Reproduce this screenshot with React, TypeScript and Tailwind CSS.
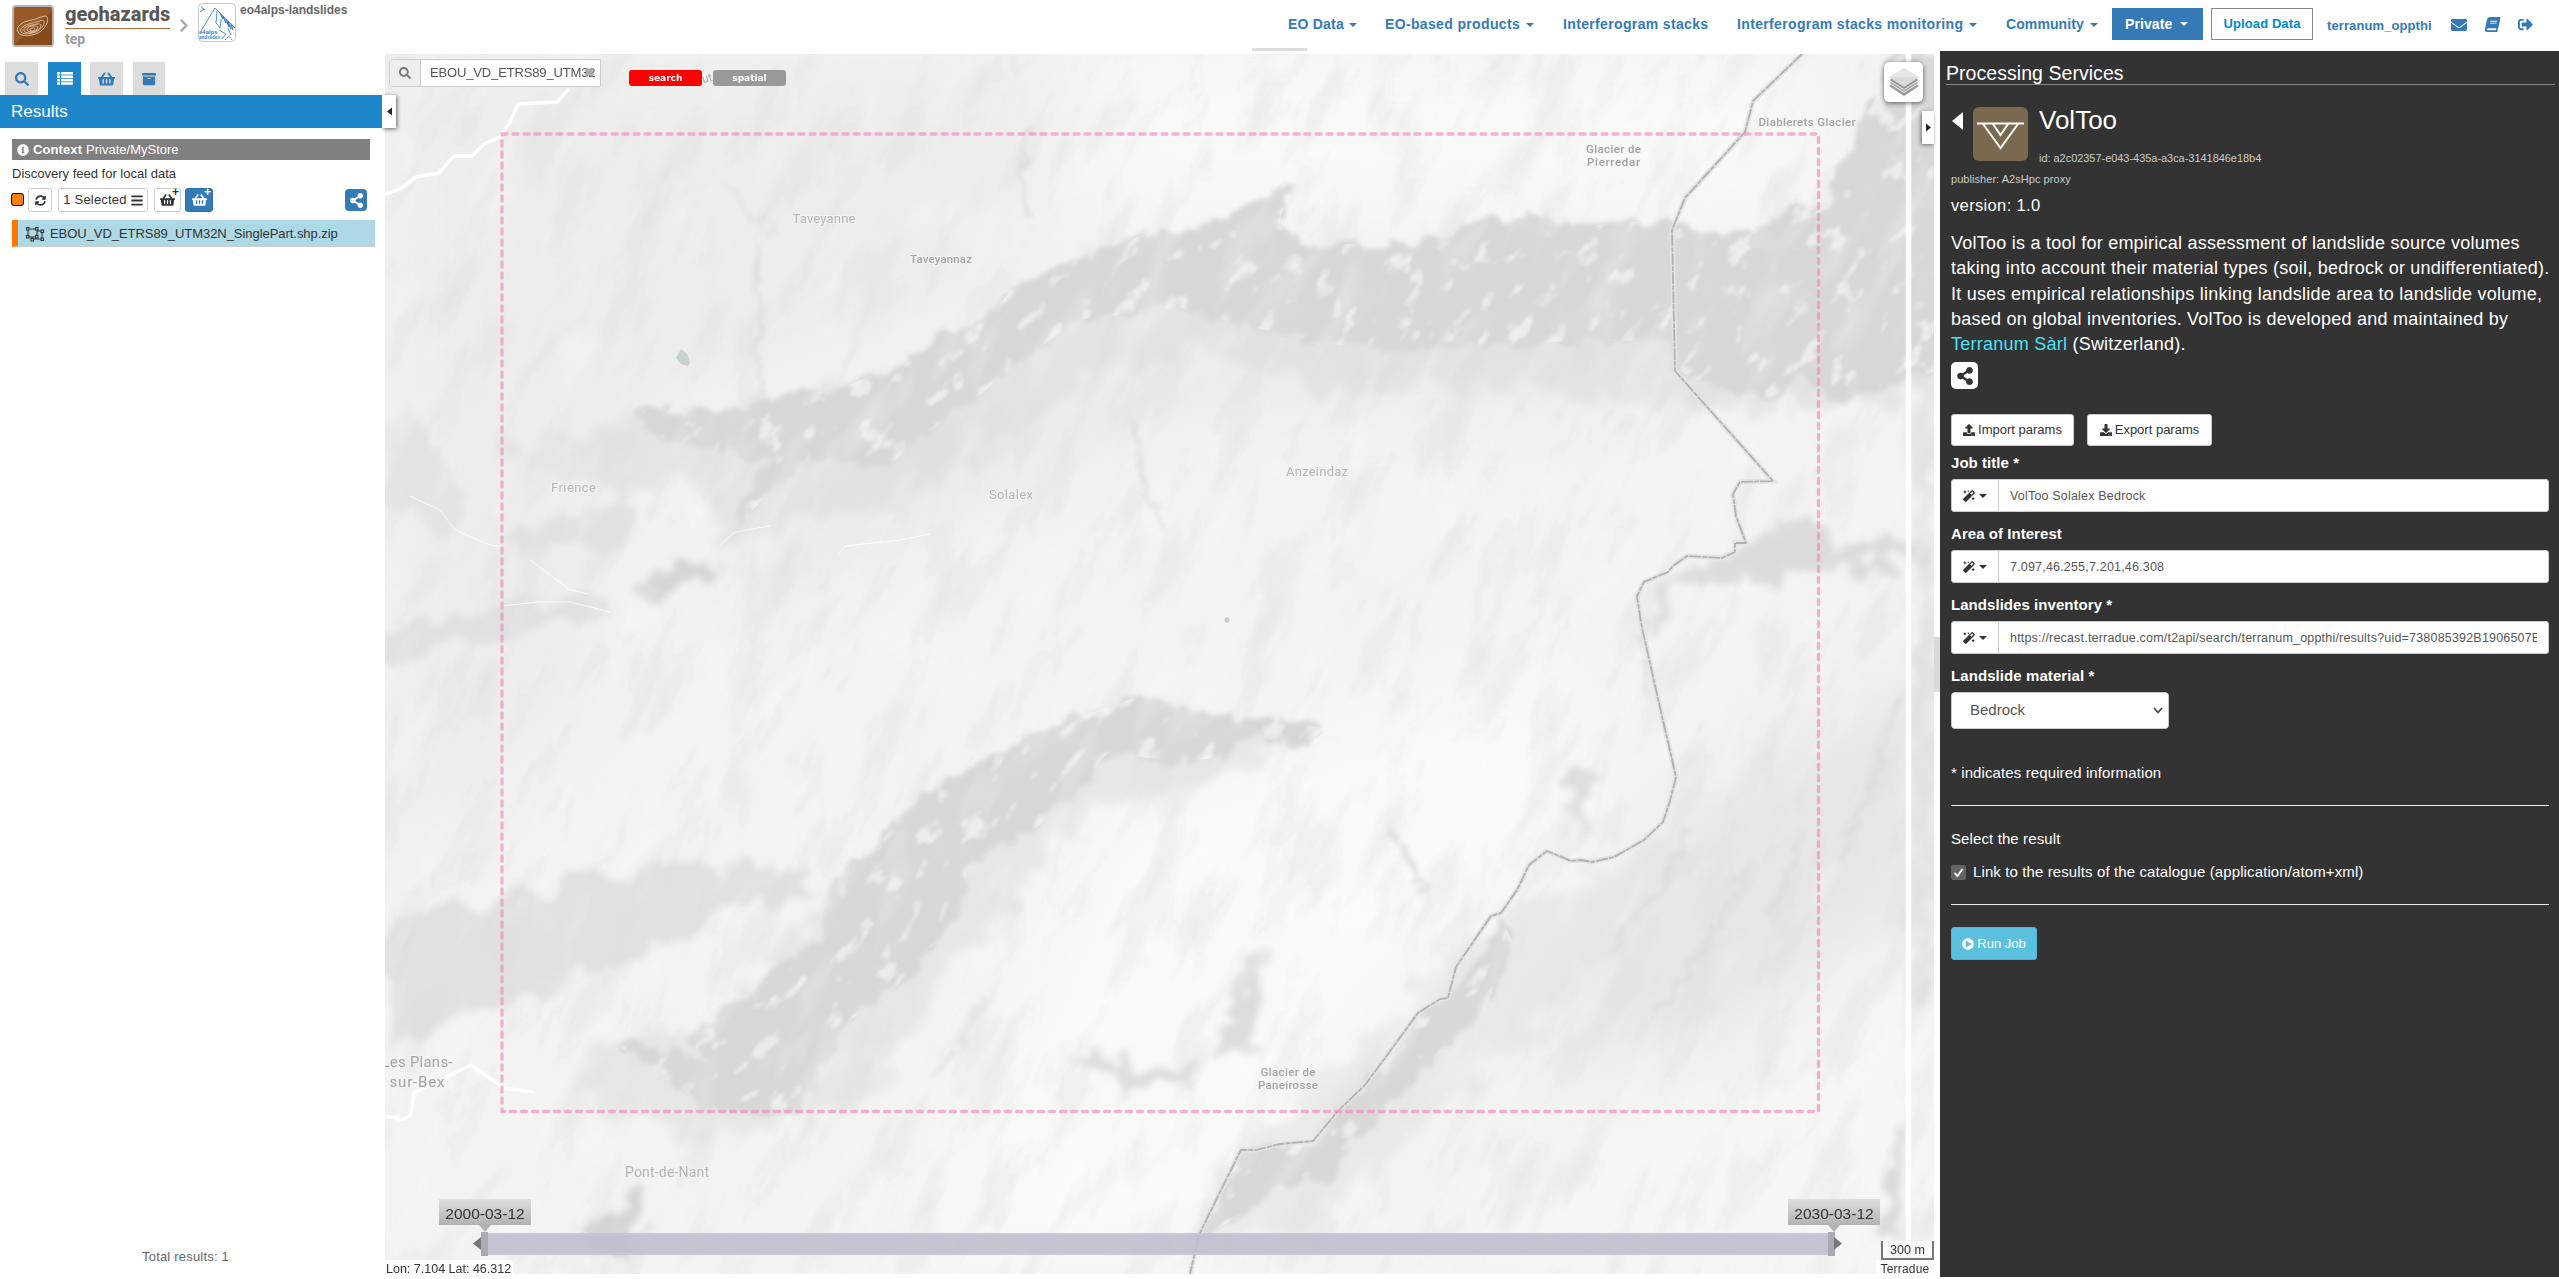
import React from 'react';
import {
  FaSearch, FaShoppingBasket, FaArchive, FaInfoCircle, FaSyncAlt, FaBars, FaShareAlt,
  FaEnvelope, FaBook, FaSignOutAlt, FaUpload, FaDownload, FaMagic, FaPlayCircle, FaChevronRight,
} from 'react-icons/fa';

function Caret({ className = '' }: { className?: string }) {
  return (
    <svg viewBox="0 0 8 4" className={`h-[4px] w-[8px] ${className}`} fill="currentColor">
      <path d="M0 0h8L4 4z" />
    </svg>
  );
}

function GeohazardsLogo() {
  return (
    <svg viewBox="0 0 42 42" className="h-[42px] w-[42px] shrink-0">
      <rect x="1" y="1" width="40" height="40" rx="3" fill="#96592a" stroke="#b9b4b0" strokeWidth="2" />
      <path d="M2 40L40 6v34z" fill="#874a1c" />
      <g fill="none" stroke="#e2c7ae" strokeWidth=".9">
        <path d="M6 27c-3-6 6-11 14-12 6-1 13-6 15-3 2 4-1 10-6 14-6 5-20 7-23 1z" />
        <path d="M9 27c-2-5 6-8 12-9 5-1 10-4 11-2 1 3-2 7-6 10-5 3-15 4-17 1z" />
        <path d="M12 26c-1-4 5-6 9-6 4-1 7-2 8 0 0 3-2 4-5 6-4 2-10 3-12 0z" />
        <path d="M15 25c0-3 4-4 6-4 3 0 5 0 5 1 0 2-2 3-4 4-3 1-6 1-7-1z" />
        <path d="M18 25c0-2 2-2 3-2s2 0 2 1-1 2-2 2-3 0-3-1z" />
      </g>
    </svg>
  );
}

function AlpsThumb() {
  return (
    <svg viewBox="0 0 38 39" className="h-[39px] w-[38px] shrink-0">
      <rect x=".5" y=".5" width="37" height="38" rx="4" fill="#fff" stroke="#c4c8cc" />
      <g fill="none" stroke="#3b82c4" strokeWidth=".9">
        <path d="M3 28L17 5l20 20" />
        <path d="M19 8l-1 12 4 5 1-9M21 27l7 4-4 5M30 25l3 7M3 4l4 3M2 9l4-3" />
        <path d="M22 10l3 6M25 13l3 7M28 16l3 8M30 18l3 8M33 21l2 6" strokeWidth="1.3" />
        <path d="M27 37l4-4 3 4" strokeDasharray="2 1" />
      </g>
      <text x="1" y="31" fontSize="6" fontWeight="bold" fill="#3b82c4" fontFamily="Liberation Sans, sans-serif">e4alps</text>
      <text x="1" y="36" fontSize="4.5" fontWeight="bold" fill="#3b82c4" fontFamily="Liberation Sans, sans-serif">andslides</text>
    </svg>
  );
}

function Header() {
  const link = 'flex items-center whitespace-nowrap';
  return (
    <header className="flex h-[51px] shrink-0 items-start bg-white">
      <div className="flex w-[1252px] items-start">
        <div className="ml-[12px] mt-[5px]"><GeohazardsLogo /></div>
        <div className="ml-[11px] mt-[2px] w-[105px]">
          <div className="h-[27px] border-b border-[#b5653a] font-['Roboto'] text-[20px] leading-[24px] font-extrabold text-[#575757]">geohazards</div>
          <div className="pt-px font-['Roboto'] text-[14px] leading-[18px] font-bold text-[#9a9a9a]">tep</div>
        </div>
        <FaChevronRight className="mt-[18px] ml-[8px] h-[15px] w-[12px] text-[#aaa]" />
        <div className="ml-[8px] mt-[3px]"><AlpsThumb /></div>
        <div className="ml-[4px] mt-[2px] text-[12px] leading-[16px] font-bold text-[#666]">eo4alps-landslides</div>
      </div>
      <nav className="flex h-[51px] items-start text-[14px] font-bold tracking-[0.350px] text-[#337ab7]">
        <div className="relative h-[51px] w-[133px]">
          <div className="absolute bottom-0 left-0 h-[3px] w-[55px] bg-[#ddd]" />
          <div className={`${link} ml-[36px] h-[49px] tracking-[0.200px]`}>EO Data<Caret className="ml-[5px]" /></div>
        </div>
        <div className={`${link} h-[49px] w-[178px]`}>EO-based products<Caret className="ml-[6px]" /></div>
        <div className={`${link} h-[49px] w-[174px]`}>Interferogram stacks</div>
        <div className={`${link} h-[49px] w-[269px]`}>Interferogram stacks monitoring<Caret className="ml-[6px]" /></div>
        <div className={`${link} h-[49px] w-[106px] tracking-[0.100px]`}>Community<Caret className="ml-[6px]" /></div>
        <div className={`${link} mt-[8px] h-[32px] w-[91px] bg-[#337ab7] pl-[13px] tracking-[0.100px] text-white`}>Private<Caret className="ml-[8px]" /></div>
        <div className="mt-[8px] ml-[8px] flex h-[32px] w-[102px] items-center justify-center border border-[#888] pb-px text-[13px] tracking-[0.100px] text-[#0088cc]">Upload Data</div>
        <div className={`${link} mt-[2px] ml-[14px] h-[47px] w-[124px] text-[13px] tracking-[0.100px]`}>terranum_oppthi</div>
        <FaEnvelope className="mt-[17px] h-[16px] w-[16px]" />
        <FaBook className="mt-[17px] ml-[18px] h-[15px] w-[15px] -skew-x-12" />
        <FaSignOutAlt className="mt-[17px] ml-[18px] h-[15px] w-[15px]" />
      </nav>
    </header>
  );
}

function ListIcon() {
  return (
    <svg viewBox="0 0 16 13" className="h-[13px] w-[16px]" fill="#fff">
      {[0, 3.4, 6.8, 10.2].map((y) => (
        <g key={y}><rect y={y} width="3" height="2.6" /><rect x="4" y={y} width="12" height="2.6" /></g>
      ))}
    </svg>
  );
}

function PolygonIcon() {
  return (
    <svg viewBox="0 0 20 16" className="h-[16px] w-[20px]" fill="none" stroke="#333" strokeWidth="1.1">
      <path d="M3 3h9v8H3zM12 5h5v8H7v-2" />
      <g fill="#add8e6">
        <rect x="1.500" y="1.500" width="2.500" height="2.500" /><rect x="10.500" y="1.500" width="2.500" height="2.500" />
        <rect x="1.500" y="9.500" width="2.500" height="2.500" /><rect x="10.500" y="9.500" width="2.500" height="2.500" />
        <rect x="16" y="4" width="2.500" height="2.500" /><rect x="16" y="12" width="2.500" height="2.500" /><rect x="6" y="12.500" width="2.500" height="2.500" />
      </g>
    </svg>
  );
}

function LeftPanel() {
  return (
    <aside className="flex w-[382px] shrink-0 flex-col bg-white text-[#333]">
      <div className="flex h-[44px] items-end pl-[5px]">
        <div className="flex h-[33px] w-[33px] items-center justify-center bg-[#ddd] text-[#337ab7]"><FaSearch className="h-[14px] w-[14px]" /></div>
        <div className="ml-[10px] flex h-[33px] w-[33px] items-center justify-center bg-[#1e87cc]"><ListIcon /></div>
        <div className="ml-[9px] flex h-[33px] w-[33px] items-center justify-center bg-[#ddd] text-[#337ab7]"><FaShoppingBasket className="h-[16px] w-[17px]" /></div>
        <div className="ml-[10px] flex h-[33px] w-[32px] items-center justify-center bg-[#ddd] text-[#337ab7]"><FaArchive className="h-[14px] w-[14px]" /></div>
      </div>
      <div className="flex h-[33px] items-center bg-[#1e87cc] pt-px pl-[11px] text-[17px] text-white">Results</div>
      <div className="mt-[11px] ml-[12px] flex h-[21px] w-[358px] items-center bg-[#808080] pl-[5px] text-[13px] text-white">
        <FaInfoCircle className="h-[12px] w-[12px]" />
        <b className="ml-[4px] tracking-[0.100px]">Context</b><span className="ml-[4px]">Private/MyStore</span>
      </div>
      <div className="mt-[4px] ml-[12px] h-[20px] text-[13px] leading-[20px]">Discovery feed for local data</div>
      <div className="mt-[4px] flex h-[24px] items-center pl-[11px]">
        <div className="-mt-px h-[13px] w-[13px] rounded-[3px] border border-black bg-[#ff7f00]" />
        <div className="ml-[4px] flex h-[24px] w-[24px] items-center justify-center rounded-[3px] border border-[#ccc]"><FaSyncAlt className="h-[11px] w-[11px]" /></div>
        <div className="ml-[6px] flex h-[24px] w-[90px] items-center justify-center rounded-[3px] border border-[#ccc] text-[13px] tracking-[0.200px]">1 Selected<FaBars className="ml-[4px] h-[13px] w-[12px]" /></div>
        <div className="relative ml-[6px] flex h-[24px] w-[27px] items-center justify-center rounded-[3px] border border-[#ccc]">
          <FaShoppingBasket className="h-[14px] w-[15px]" /><span className="absolute top-[-5px] right-[1px] text-[12px] leading-[16px] font-bold">+</span>
        </div>
        <div className="relative ml-[4px] flex h-[24px] w-[28px] items-center justify-center rounded-[3px] border border-[#2e6da4] bg-[#337ab7] text-white">
          <FaShoppingBasket className="h-[14px] w-[15px]" /><span className="absolute top-[-5px] right-[1px] text-[12px] leading-[16px] font-bold">+</span>
        </div>
        <div className="ml-[132px] flex h-[22px] w-[22px] items-center justify-center rounded-[4px] bg-[#337ab7] text-white"><FaShareAlt className="h-[15px] w-[15px]" /></div>
      </div>
      <div className="mt-[8px] ml-[12px] flex h-[27px] w-[363px] items-center border-b border-l-[6px] border-b-[#ccc] border-l-[#ff7700] bg-[#add8e6] pt-px pl-[7px] text-[13px]">
        <PolygonIcon /><span className="ml-[5px] tracking-[-0.05px]">EBOU_VD_ETRS89_UTM32N_SinglePart.shp.zip</span>
      </div>
      <div className="mt-auto mb-[12px] pl-[142px] text-[13px] leading-[16px] tracking-[0.200px] text-[#666]">Total results: 1</div>
    </aside>
  );
}

const UPPER_RIDGE = 'M635 410L747 410 752 400 839 389 880 372 921 358 936 332 967 325 987 319 1012 289 1064 266 1145 234 1180 232 1202 224 1240 214 1262 196 1290 180 1279 226 1308 244 1422 244 1485 219 1534 216 1577 227 1665 219 1718 233 1752 233 1791 206 1829 207 1840 170 1856 130 1880 90 1890 54 1940 54 1940 370 1907 380 1839 405 1805 373 1771 401 1728 394 1674 369 1674 341 1568 341 1430 350 1325 344 1291 337 1180 308 1084 319 1033 351 972 401 911 444 890 466 803 462 770 490 737 530 745 490 768 462 706 451 645 433z';
const LOWER_RIDGE = 'M1146 694L1057 724 997 754 927 790 877 844 828 886 823 940 778 965 728 1011 688 1033 703 1061 649 1040 619 1047 668 1076 708 1111 798 1115 818 1076 838 1029 897 986 957 919 967 869 1040 825 1076 790 1106 754 1176 761 1226 758 1246 736 1305 744 1325 729 1265 715 1236 722 1196 711z';
const BORDER_RIDGE = 'M1501 915L1478 955 1455 997 1420 1013 1375 1076 1335 1118 1315 1143 1241 1151 1199 1240 1240 1215 1275 1190 1335 1179 1360 1136 1425 1068 1484 1011 1514 947z';
const BORDER = 'M1802 54L1753 101 1745 132 1685 198 1672 230 1675 371 1773 481 1740 482 1733 494 1736 516 1746 543 1735 543 1735 552 1722 558 1687 556 1673 566 1668 572 1644 582 1637 596 1641 623 1656 690 1676 777 1670 801 1663 822 1644 840 1614 857 1592 862 1581 860 1571 861 1547 851 1529 865 1517 890 1501 913 1491 916 1456 967 1448 998 1440 999 1418 1013 1385 1058 1365 1085 1338 1111 1323 1129 1313 1141 1280 1144 1256 1150 1241 1150 1221 1190 1199 1235 1190 1274';

const PLACES: { t: string; x: number; y: number; s: number; w: number; c: string; b?: boolean }[] = [
  { t: 'Taveyanne', x: 824, y: 223, s: 13, w: 63, c: '#b4b4b4' },
  { t: 'Taveyannaz', x: 941, y: 263, s: 11.5, w: 62, c: '#a3a3a3', b: true },
  { t: 'Frience', x: 573.5, y: 492, s: 13, w: 45, c: '#b4b4b4' },
  { t: 'Solalex', x: 1011, y: 499, s: 13, w: 44, c: '#b4b4b4' },
  { t: 'Anzeindaz', x: 1317, y: 476, s: 13, w: 62, c: '#b4b4b4' },
  { t: 'Glacier de', x: 1613.5, y: 153, s: 11.5, w: 55, c: '#a3a3a3', b: true },
  { t: 'Pierredar', x: 1613.5, y: 166, s: 11.5, w: 53, c: '#a3a3a3', b: true },
  { t: 'Diablerets Glacier', x: 1807, y: 126, s: 11.5, w: 97, c: '#a3a3a3', b: true },
  { t: 'Les Plans-', x: 417, y: 1067, s: 15, w: 71, c: '#a3a3a3' },
  { t: 'sur-Bex', x: 417, y: 1087, s: 15, w: 55, c: '#a3a3a3' },
  { t: 'Glacier de', x: 1288, y: 1076, s: 11.5, w: 55, c: '#a3a3a3', b: true },
  { t: 'Paneirosse', x: 1288, y: 1089, s: 11.5, w: 60, c: '#a3a3a3', b: true },
  { t: 'Pont-de-Nant', x: 667, y: 1177, s: 14, w: 84, c: '#b4b4b4' },
];

function Terrain() {
  return (
    <svg viewBox="385 54 1549 1220" className="block h-[1220px] w-[1549px]">
      <defs>
        <filter id="rough" x="-10%" y="-10%" width="120%" height="120%">
          <feTurbulence type="fractalNoise" baseFrequency="0.05" numOctaves="3" seed="4" result="n" />
          <feDisplacementMap in="SourceGraphic" in2="n" scale="24" xChannelSelector="R" yChannelSelector="G" />
          <feGaussianBlur stdDeviation="2" />
        </filter>
        <filter id="soft" x="-30%" y="-30%" width="160%" height="160%">
          <feTurbulence type="fractalNoise" baseFrequency="0.03" numOctaves="3" seed="9" result="n" />
          <feDisplacementMap in="SourceGraphic" in2="n" scale="50" xChannelSelector="R" yChannelSelector="G" />
          <feGaussianBlur stdDeviation="3.500" />
        </filter>
        <filter id="halo" x="-10%" y="-10%" width="120%" height="120%">
          <feTurbulence type="fractalNoise" baseFrequency="0.03" numOctaves="3" seed="12" result="n" />
          <feDisplacementMap in="SourceGraphic" in2="n" scale="60" xChannelSelector="R" yChannelSelector="G" />
          <feGaussianBlur stdDeviation="4" />
        </filter>
        <filter id="wide" x="-30%" y="-30%" width="160%" height="160%"><feGaussianBlur stdDeviation="40" /></filter>
        <filter id="shade" x="0" y="0" width="100%" height="100%">
          <feTurbulence type="fractalNoise" baseFrequency="0.009 0.026" numOctaves="4" seed="21" />
          <feColorMatrix values="0 0 0 0 .7  0 0 0 0 .7  0 0 0 0 .695  2.2 0 0 0 -.98" />
          <feComponentTransfer><feFuncA type="discrete" tableValues="0 0.09 0.18 0.27 0.36 0.45 .5" /></feComponentTransfer>
          <feGaussianBlur stdDeviation="0.700" />
        </filter>
        <filter id="light" x="0" y="0" width="100%" height="100%">
          <feTurbulence type="fractalNoise" baseFrequency="0.01 0.03" numOctaves="4" seed="33" />
          <feColorMatrix values="0 0 0 0 .98  0 0 0 0 .98  0 0 0 0 .975  0 3 0 0 -1.55" />
          <feGaussianBlur stdDeviation="0.800" />
        </filter>
        <filter id="glint" x="0" y="0" width="100%" height="100%">
          <feTurbulence type="fractalNoise" baseFrequency="0.03 0.06" numOctaves="3" seed="7" />
          <feColorMatrix values="0 0 0 0 .93  0 0 0 0 .93  0 0 0 0 .925  0 7 0 0 -4.25" />
          <feGaussianBlur stdDeviation="1" />
        </filter>
        <clipPath id="ridges"><path d={UPPER_RIDGE} /><path d={LOWER_RIDGE} /><path d={BORDER_RIDGE} /></clipPath>
      </defs>
      <rect x="385" y="54" width="1549" height="1220" fill="#f3f3f1" />
      <g filter="url(#wide)">
        <path d="M385 54H1060L1000 300 640 420 600 700 385 900z" fill="#ededec" />
        <path d="M1100 54H1800V210H1100z" fill="#f9f9f7" />
        <path d="M1100 800L1560 640 1600 820 1400 1000 1200 1274H900z" fill="#f9f9f7" />
        <path d="M1690 800L1934 660V900L1700 1060 1520 1060z" fill="#e6e6e5" />
        <path d="M1934 900V1274H1400z" fill="#f6f6f4" />
        <path d="M800 460L1180 310H1680L1640 400 1200 400 900 540 700 640z" fill="#e9e9e8" />
      </g>
      <g transform="rotate(-66 1160 664)"><rect x="60" y="-400" width="2200" height="2150" filter="url(#shade)" opacity=".85" /></g>
      <g filter="url(#halo)" opacity=".55">
        <path d="M635 420L900 380 1100 260 1300 270 1700 250 1934 220 1934 400 1700 410 1500 385 1330 390 1200 350 1100 370 990 450 900 500 800 520 720 560 700 490 560 480 500 450z" fill="#dcdcdb" />
        <path d="M1146 700L960 780 830 900 720 1020 610 1040 560 1090 700 1140 850 1110 960 960 1090 810 1180 790 1340 740z" fill="#dededd" />
        <path d="M1501 915L1241 1151 1199 1240 1300 1230 1450 1100 1560 1010 1640 900 1700 860 1660 840z" fill="#e2e2e1" />
      </g>
      <g filter="url(#soft)">
        <path d="M385 926L480 904 559 883 688 861 798 868 830 890 758 904 658 947 529 997 385 1047z" fill="#dcdcdb" opacity=".8" />
        <path d="M385 635L480 612 560 596 620 600 520 628 440 655 385 670z" fill="#dcdcdb" opacity=".7" />
        <path d="M640 605L655 573 727 558 686 591z" fill="#d5d5d4" />
        <path d="M385 430L412 410 440 450 470 510 440 540 385 500z" fill="#e0e0df" opacity=".7" />
        <path d="M500 540L560 515 640 515 620 545 520 555z" fill="#dfdfde" opacity=".8" />
        <path d="M1066 1050L1120 1066 1200 1068 1190 1085 1136 1093z" fill="#dcdcdb" />
        <path d="M1250 945L1265 960 1248 1040 1220 1062 1226 1020z" fill="#dcdcdb" />
        <path d="M648 1179L579 1240 619 1250 650 1200z" fill="#d4d4d3" />
        <path d="M1892 1130L1906 1110 1900 1240 1880 1250z" fill="#dadad9" />
        <path d="M1574 765L1590 765 1580 830 1566 850z" fill="#dededd" />
        <path d="M1735 552L1790 520 1850 545 1934 540 1934 560 1830 570 1740 580 1670 590 1660 640 1650 590z" fill="#dbdbda" />
        <path d="M1912 54H1934V1000L1912 1000z" fill="#dcdcdb" opacity=".6" />
      </g>
      <g fill="none" stroke="#dadad9" strokeLinecap="round" strokeWidth="5" filter="url(#rough)" opacity=".7">
        <path d="M1030 130L1020 168 1028 214M757 248L760 300 758 350 763 390M1135 426L1145 480 1160 523M1390 826L1405 860 1425 890" />
        <path d="M1640 620L1646 690M1900 700L1870 790 1840 860M1750 860L1710 940 1660 1010M1690 830L1660 890 1610 950M1800 840L1770 920" />
        <path d="M1000 980L960 1040 930 1080M770 230L740 200 720 185" opacity=".6" />
      </g>
      <g filter="url(#rough)" fill="#d8d8d7">
        <path d={UPPER_RIDGE} /><path d={LOWER_RIDGE} /><path d={BORDER_RIDGE} />
      </g>
      <g clipPath="url(#ridges)">
        <g transform="rotate(-50 1160 664)"><rect x="60" y="-400" width="2200" height="2150" filter="url(#glint)" opacity=".65" /></g>
      </g>
      <g transform="rotate(-62 1160 664)"><rect x="60" y="-400" width="2200" height="2150" filter="url(#light)" opacity=".25" /></g>
      <path d="M681 349L687 354 690 362 688 366 681 364 676 358z" fill="#c7d0d2" />
      <ellipse cx="1227" cy="620" rx="2.500" ry="2.800" fill="#c7cccd" />
      <g fill="none" stroke="#fff" strokeLinecap="round" strokeLinejoin="round">
        <path d="M568 90L557 102 518 104 510 122 500 137 484 144 472 156 454 156 439 173 416 177 400 189 385 194M385 1117L394 1117 402 1120 411 1115 414 1093 430 1085 471 1065 504 1088 532 1092" strokeWidth="3.500" />
        <path d="M410 496L440 510 455 530 490 545 500 546M500 606L540 602 570 602 610 612M530 560L570 590 588 594M720 545L735 532 770 526M838 555L845 546 900 540 930 534" strokeWidth="1" opacity=".8" />
      </g>
      <path d={BORDER} fill="none" stroke="#e4e4e3" strokeWidth="5" />
      <path d={BORDER} fill="none" stroke="#b2b2b1" strokeWidth="1.800" strokeDasharray="12 1 5 1" />
      <path d="M1908.500 54V1245" stroke="#fff" strokeWidth="5.500" />
      <g fontFamily="Roboto, sans-serif" textAnchor="middle" stroke="#f3f3f2" strokeWidth="2" paintOrder="stroke">
        {PLACES.map((p, i) => (
          <text key={i} x={p.x} y={p.y} fontSize={p.s} fontWeight={p.b ? 500 : 400} fill={p.c} textLength={p.w}>{p.t}</text>
        ))}
        <text x="708" y="82" fontSize="12" fill="#a8a8a8" transform="rotate(-14 708 82)">ut</text>
      </g>
      <rect x="502" y="134" width="1316.500" height="977.500" fill="none" stroke="#f08dbf" strokeOpacity=".68" strokeWidth="3.300" strokeDasharray="5 6" strokeLinecap="round" />
    </svg>
  );
}

function LayersIcon() {
  return (
    <svg viewBox="0 0 30 28" className="h-[28px] w-[30px]">
      <path d="M15 9L30 18 15 28 0 18z" fill="#9a9a9a" />
      <path d="M15 6L30 15 15 24.500 0 15z" fill="#a8a8a8" stroke="#fff" strokeWidth=".8" />
      <path d="M15 3L30 12 15 21.500 0 12z" fill="#8e8e8e" stroke="#fff" strokeWidth=".8" />
      <path d="M15 0L30 9.500 15 19 0 9.500z" fill="#d9d9d9" />
      <path d="M15 0L30 9.500 0 9.500z" fill="#e6e6e6" />
    </svg>
  );
}

function DateFlag({ label, className }: { label: string; className: string }) {
  return (
    <div className={`absolute top-[1145px] w-[92px] ${className}`}>
      <div className="flex h-[26px] items-center justify-center bg-linear-to-b from-[#dedede] to-[#b2b2b2] pt-[3px] text-[15.500px] text-[#333]">{label}</div>
      <svg viewBox="0 0 12 7" className="mx-auto h-[7px] w-[12px]"><path d="M0 0h12L6 7z" fill="#b2b2b2" /></svg>
    </div>
  );
}

function MapPane() {
  return (
    <div className="relative mt-[3px] ml-[3px] h-[1220px] w-[1549px] shrink-0">
      <Terrain />
      <div className="absolute top-[5px] left-[4px] flex h-[28px] w-[212px] overflow-hidden rounded-l-[4px] border border-[#ccc] bg-white">
        <div className="flex w-[31px] shrink-0 items-center justify-center border-r border-[#ccc] bg-[#eee]"><FaSearch className="h-[12px] w-[12px] text-[#777]" /></div>
        <div className="relative flex w-[179px] shrink-0 items-center pl-[9px] text-[13px] whitespace-nowrap text-[#555]">
          <span className="tracking-[-0.150px]">EBOU_VD_ETRS89_UTM32</span>
          <span className="absolute top-[5px] right-[5px] text-[13px] leading-[16px] font-bold text-[#aaa]">✖</span>
        </div>
      </div>
      <div className="absolute top-[16px] left-[244px] flex gap-[11px] text-center font-['DejaVu_Sans'] text-[9px] leading-[16px] font-bold text-white">
        <div className="h-[16px] w-[73px] rounded-[3px] bg-[#ff0000]">search</div>
        <div className="h-[16px] w-[73px] rounded-[3px] bg-[#999]">spatial</div>
      </div>
      <div className="absolute top-[41px] left-[-3px] flex h-[33px] w-[14px] items-center bg-white pl-[5px] shadow-[1px_1px_4px_rgba(0,0,0,0.6)] [clip-path:inset(-5px_-6px_-6px_0)]">
        <svg viewBox="0 0 5 8" className="h-[9px] w-[5px]"><path d="M5 0v8L0 4z" fill="#222" /></svg>
      </div>
      <div className="absolute top-[57px] left-[1537px] flex h-[33px] w-[12px] items-center bg-white pl-[4px] shadow-[-1px_1px_4px_rgba(0,0,0,0.5)]">
        <svg viewBox="0 0 5 8" className="h-[9px] w-[5px]"><path d="M0 0v8l5-4z" fill="#222" /></svg>
      </div>
      <div className="absolute top-[8px] left-[1499px] flex h-[40px] w-[39px] items-center justify-center rounded-[5px] bg-white shadow-[0_1px_5px_rgba(0,0,0,0.6)]"><LayersIcon /></div>
      <DateFlag label="2000-03-12" className="left-[54px]" />
      <DateFlag label="2030-03-12" className="left-[1403px]" />
      <div className="absolute top-[1179px] left-[103px] h-[22px] w-[1340px] border-y-2 border-[#c8c8d8]/80 bg-[#bfbfcc]/90" />
      <div className="absolute top-[1178px] left-[96px] h-[24px] w-[7px] bg-[#aaaab2]" />
      <div className="absolute top-[1178px] left-[1443px] h-[24px] w-[7px] bg-[#aaaab2]" />
      <svg viewBox="0 0 8 13" className="absolute top-[1183px] left-[88px] h-[13px] w-[8px]"><path d="M8 0v13L0 6.500z" fill="#777" /></svg>
      <svg viewBox="0 0 8 13" className="absolute top-[1183px] left-[1449px] h-[13px] w-[8px]"><path d="M0 0v13l8-6.500z" fill="#777" /></svg>
      <div className="absolute right-0 bottom-[14px] h-[19px] w-[53px] border-2 border-t-0 border-[#777] bg-white/50 text-center text-[12.500px] leading-[18px] tracking-[0.100px] text-[#333]">300 m</div>
      <div className="absolute right-0 bottom-0 h-[14px] w-[58px] bg-white/70 pt-px text-center text-[12px] leading-[16px] tracking-[0.200px] text-[#333]">Terradue</div>
      <div className="absolute bottom-0 left-0 h-[14px] w-[128px] rounded-tr-[4px] bg-white/80 pt-px pl-px text-[12.500px] leading-[16px] whitespace-nowrap text-[#333]">Lon: 7.104 Lat: 46.312</div>
    </div>
  );
}

function Field({ label, value }: { label: string; value: string }) {
  return (
    <div className="h-[71px]">
      <div className="h-[26px] text-[15px] leading-[20px] font-bold tracking-[0.050px]">{label}</div>
      <div className="flex h-[33px] overflow-hidden rounded-[3px] border border-[#ccc] bg-white text-[#333]">
        <div className="flex w-[47px] shrink-0 items-center justify-center border-r border-[#ccc]"><FaMagic className="h-[12px] w-[12px]" /><Caret className="ml-[4px]" /></div>
        <div className="mr-[11px] ml-[11px] flex flex-1 items-center overflow-hidden pt-px text-[12.500px] tracking-[0.190px] whitespace-nowrap text-[#555]"><span>{value}</span></div>
      </div>
    </div>
  );
}

function ServicePanel() {
  return (
    <aside className="flex w-[619px] flex-col bg-[#333] pl-[6px] text-white">
      <div className="mr-[4px] flex h-[34px] items-end border-b border-[#888] text-[19.500px] leading-[22px] tracking-[0.050px]">Processing Services</div>
      <div className="mr-[10px] ml-[5px] flex flex-col">
        <div className="mt-[22px] flex h-[55px]">
          <svg viewBox="0 0 11 18" className="mt-[5px] ml-px h-[18px] w-[11px]"><path d="M11 0v18L0 9z" fill="#fff" /></svg>
          <svg viewBox="0 0 55 54" className="ml-[10px] h-[54px] w-[55px]">
            <rect width="55" height="54" rx="6" fill="#7a684f" />
            <path d="M4 16.500H51M10 17L27.500 41 45 17M20 17L27.500 28 35 17" fill="none" stroke="#fff" strokeWidth="2" />
          </svg>
          <div className="ml-[11px]">
            <div className="text-[26px] leading-[26px]">VolToo</div>
            <div className="mt-[18px] text-[11px] leading-[14px] tracking-[-0.04px] whitespace-nowrap text-[#ccc]">id: a2c02357-e043-435a-a3ca-3141846e18b4</div>
          </div>
        </div>
        <div className="mt-[10px] h-[14px] text-[11px] leading-[14px] tracking-[0.050px] text-[#ccc]">publisher: A2sHpc proxy</div>
        <div className="mt-[9px] h-[20px] text-[16.500px] leading-[20px] tracking-[0.350px]">version: 1.0</div>
        <p className="mt-[16px] h-[125px] w-[606px] text-[18px] leading-[25.300px] tracking-[0.240px] whitespace-nowrap">
          VolToo is a tool for empirical assessment of landslide source volumes<br />
          taking into account their material types (soil, bedrock or undifferentiated).<br />
          It uses empirical relationships linking landslide area to landslide volume,<br />
          based on global inventories. VolToo is developed and maintained by<br />
          <span className="text-[#4fe0f5]">Terranum Sàrl</span> (Switzerland).
        </p>
        <div className="mt-[6px] flex h-[27px] w-[27px] items-center justify-center rounded-[5px] bg-white text-[#333]"><FaShareAlt className="h-[18px] w-[18px]" /></div>
        <div className="mt-[25px] flex h-[32px] gap-[13px] text-[13px] text-[#333]">
          <div className="flex w-[123px] items-center justify-center gap-[3px] rounded-[3px] border border-[#ccc] bg-white"><FaUpload className="h-[12px] w-[12px]" />Import params</div>
          <div className="flex w-[125px] items-center justify-center gap-[3px] rounded-[3px] border border-[#ccc] bg-white"><FaDownload className="h-[12px] w-[12px]" />Export params</div>
        </div>
        <div className="mt-[7px]">
          <Field label="Job title *" value="VolToo Solalex Bedrock" />
          <Field label="Area of Interest" value="7.097,46.255,7.201,46.308" />
          <Field label="Landslides inventory *" value="https://recast.terradue.com/t2api/search/terranum_oppthi/results?uid=738085392B1906507B" />
        </div>
        <div className="h-[26px] text-[15px] leading-[20px] font-bold tracking-[0.080px]">Landslide material *</div>
        <div className="flex h-[37px] w-[218px] items-center justify-between rounded-[4px] border border-[#ccc] bg-white pr-[5px] pl-[18px] text-[15px] text-[#555]">
          Bedrock
          <svg viewBox="0 0 10 7" className="h-[7px] w-[10px]" fill="none" stroke="#444" strokeWidth="1.700"><path d="M1 1l4 4.500L9 1" /></svg>
        </div>
        <div className="mt-[34px] h-[20px] text-[15px] leading-[20px] tracking-[0.110px]">* indicates required information</div>
        <div className="mt-[22px] h-px bg-[#eee]" />
        <div className="mt-[23px] h-[20px] text-[15px] leading-[20px] tracking-[0.110px]">Select the result</div>
        <div className="mt-[13px] flex h-[20px] items-center">
          <svg viewBox="0 0 15 15" className="h-[15px] w-[15px]"><rect width="15" height="15" rx="2" fill="#63636b" /><path d="M3.500 8l3 3 5-7" fill="none" stroke="#fff" strokeWidth="1.800" /></svg>
          <span className="ml-[7px] text-[15px] leading-[20px] tracking-[0.110px]">Link to the results of the catalogue (application/atom+xml)</span>
        </div>
        <div className="mt-[22px] h-px bg-[#eee]" />
        <div className="mt-[22px] flex h-[33px] w-[86px] items-center justify-center gap-[3px] rounded-[3px] border border-[#46b8da] bg-[#5bc0de] text-[13px]"><FaPlayCircle className="h-[12px] w-[12px]" />Run Job</div>
      </div>
    </aside>
  );
}

export default function App() {
  return (
    <div className="flex h-[1279px] w-[2559px] flex-col overflow-hidden bg-white font-['Liberation_Sans',Arial,sans-serif]">
      <Header />
      <main className="flex h-[1226px]">
        <LeftPanel />
        <MapPane />
        <div className="w-[6px] shrink-0 pt-[586px]"><div className="h-[55px] bg-[#d9d9d8]" /></div>
        <ServicePanel />
      </main>
    </div>
  );
}
